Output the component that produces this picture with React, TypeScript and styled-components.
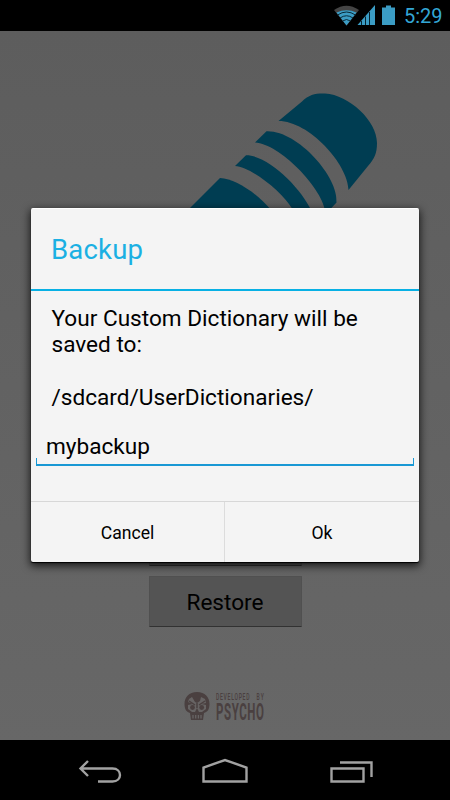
import React from 'react';
import styled, { createGlobalStyle } from 'styled-components';

const Global = createGlobalStyle`
  * { box-sizing: border-box; }
  body { margin: 0; background: #000; font-family: Roboto, "Liberation Sans", sans-serif; }
`;

const Screen = styled.div`
  position: relative;
  display: flex;
  flex-direction: column;
  width: 450px;
  height: 800px;
  overflow: hidden;
  background: #000;
`;

const StatusBar = styled.header`
  display: flex;
  justify-content: flex-end;
  align-items: flex-start;
  height: 31px;
  padding-right: 8px;
  color: #33a7d6;
`;

const StatusIcons = styled.svg`
  display: block;
  width: 64px;
  height: 31px;
`;

const Clock = styled.time`
  width: 38px;
  margin-left: 8px;
  padding-top: 4px;
  font-size: 20px;
  line-height: 24px;
  white-space: nowrap;
`;

const Content = styled.main`
  display: flex;
  flex-direction: column;
  align-items: center;
  height: 709px;
  background: linear-gradient(#5d5d5d, #676767);
`;

const Artwork = styled.svg`
  display: block;
  flex: none;
  width: 450px;
  height: 390px;
`;

const Actions = styled.div`
  display: flex;
  flex-direction: column;
  gap: 10px;
  padding-top: 94px;
`;

const HoloButton = styled.button`
  width: 153px;
  height: 51px;
  padding: 1px 0 0;
  border: 1px solid #505050;
  border-bottom: 1px solid #323232;
  border-radius: 1px;
  background: #545454;
  color: #000;
  font: 400 22.6px/49px Roboto, sans-serif;
`;

const Credit = styled.footer`
  display: flex;
  gap: 6px;
  width: 82px;
  height: 30px;
  margin: 64px 0 0 -1px;
  color: #4a4040;
`;

const Skull = styled.svg`
  flex: none;
  width: 26px;
  height: 30px;
`;

const CreditText = styled.svg`
  flex: none;
  width: 50px;
  height: 34px;
  overflow: visible;
  font-family: Roboto, sans-serif;
  fill: currentColor;
`;

const NavBar = styled.nav`
  display: flex;
  justify-content: center;
  height: 60px;
`;

const NavIcon = styled.svg`
  width: 126px;
  height: 60px;
  fill: none;
  stroke: #a2a2a2;
  stroke-width: 2.4;
`;

const Overlay = styled.div`
  position: absolute;
  top: 208px;
  left: 31px;
  width: 388px;
`;

const Dialog = styled.section`
  display: flex;
  flex-direction: column;
  height: 354px;
  border-radius: 2px;
  border-top: 1px solid #fff;
  background: #f4f4f4;
  box-shadow: 0 1px 1px #000, 0 3px 8px 1px rgba(0, 0, 0, 0.75);
  overflow: hidden;
`;

const Title = styled.h1`
  height: 82px;
  margin: 0;
  padding-left: 20px;
  border-bottom: 2px solid #08b0e4;
  color: #1bb0e3;
  font-size: 27.5px;
  font-weight: 400;
  line-height: 82px;
  letter-spacing: 0.2px;
`;

const Message = styled.p`
  height: 127px;
  margin: 0;
  padding: 15px 0 0 20.5px;
  color: #000;
  font-size: 22.6px;
  line-height: 26.2px;
  white-space: pre;
`;

const Field = styled.div`
  position: relative;
  height: 48px;
  margin: 0 5px;
  padding-left: 10px;
  font-size: 22.6px;
  line-height: 57px;

  &::after {
    content: '';
    position: absolute;
    left: 0;
    right: 0;
    bottom: 0;
    height: 6px;
    border: solid #1998d4;
    border-width: 0 1.5px 2px;
  }
`;

const ButtonRow = styled.div`
  display: grid;
  grid-template-columns: 194px 194px;
  height: 61px;
  margin-top: auto;
  border-top: 1px solid #d7d7d7;
`;

const DialogButton = styled.button<{ $divided?: boolean }>`
  padding: 1px 0 0;
  border: 0;
  border-right: ${(p) => (p.$divided ? '1px solid #dcdcdc' : '0')};
  background: transparent;
  color: #000;
  font: 400 17.6px Roboto, sans-serif;
`;

export default function App() {
  return (
    <Screen>
      <Global />
      <StatusBar>
        <StatusIcons viewBox="332 0 64 31" fill="#3b9cc4">
          <path d="M334 10Q346.500 1.500 359 10L346.500 25.500Z" fill="#444" />
          <path d="M336.500 12.500Q346.500 8 356.500 12.500L346.500 25.500Z" />
          <path d="M337.500 15Q346.500 9 355.500 15M340 18Q346.500 13.500 353 18M342.500 21Q346.500 18 350.500 21" fill="none" stroke="#092a38" strokeWidth="1" />
          <path d="M357.500 25L375 5V25Z" />
          <path d="M361.500 21V25M365.500 16.500V25M369.500 12V25" stroke="#05222e" strokeWidth="1" />
          <path d="M382 7.500H386V5.500H391V7.500H395V25H382Z" />
        </StatusIcons>
        <Clock>5:29</Clock>
      </StatusBar>
      <Content>
        <Artwork viewBox="0 31 450 390" fill="#003d52">
          <path d="M278.500 121L302 101.500C309 94.500 316 93.300 325 93.600C349 95 377 121 377 143C377 154 374 159 368 166L348.500 190C348 164 309 121 278.500 121Z" />
          <path d="M266.500 131.300L255 142.500C280 144 321 187 325 210L329.500 210L336.500 202.500C339 177 297 130 266.500 131.300Z" />
          <path d="M246 155.300L235 166C251 167 282 191 293 210H311C301 188 268 155 246 155.300Z" />
          <path d="M220 178L60 338L120 390L271 210C256 192 235 179 220 178Z" />
        </Artwork>
        <Actions>
          <HoloButton>Backup</HoloButton>
          <HoloButton>Restore</HoloButton>
        </Actions>
        <Credit>
          <Skull viewBox="0 0 26 30">
            <path d="M13 1C5 1 .5 6 .5 13C.5 19 3 21 6 22L7 29H19L20 22C23 21 25.500 19 25.500 13C25.500 6 21 1 13 1Z" fill="#4a4040" />
            <path d="M5 8L8 6L11 11L13 12L16 10L17 6L21 8L22 12L17 13L22 14L22 18L18 21H15L13 17L11 21H8L4 18V14L9 13L4 11Z" fill="#676464" />
            <circle cx="8.500" cy="16.500" r="2.400" fill="#4a4040" />
            <circle cx="17.700" cy="16.500" r="2.400" fill="#4a4040" />
            <path d="M5 10L11 14M21 10L15 14M13 12V17" stroke="#4a4040" strokeWidth="1.500" />
            <path d="M9 24V27.500M11.700 24V27.500M14.400 24V27.500M17 24V27.500" stroke="#676464" strokeWidth="1.300" />
          </Skull>
          <CreditText viewBox="0 0 50 34">
            <text transform="translate(0 8.500) scale(.62 1)" fontSize="8.200" fontWeight="500" textLength="54">DEVELOPED</text>
            <text transform="translate(40.500 8.500) scale(.62 1)" fontSize="8.200" fontWeight="500" textLength="12">BY</text>
            <text transform="translate(0 29) scale(.49 1)" fontSize="23.500" fontWeight="700" textLength="98">PSYCHO</text>
          </CreditText>
        </Credit>
      </Content>
      <NavBar>
        <NavIcon viewBox="36 740 126 60">
          <path d="M88 761L80.500 768.500L88 776M81 768.500H112.500C122.500 768.500 122.500 781.500 112.500 781.500H98" />
        </NavIcon>
        <NavIcon viewBox="162 740 126 60">
          <path d="M203.500 781.500V767.500L225 760L246.500 767.500V781.500Z" />
        </NavIcon>
        <NavIcon viewBox="288 740 126 60">
          <path d="M331.500 768.500H363.500V781.500H331.500ZM340 762.500H371.500V777" />
        </NavIcon>
      </NavBar>
      <Overlay>
        <Dialog role="dialog">
          <Title>Backup</Title>
          <Message>{'Your Custom Dictionary will be\nsaved to:\n\n/sdcard/UserDictionaries/'}</Message>
          <Field>mybackup</Field>
          <ButtonRow>
            <DialogButton $divided>Cancel</DialogButton>
            <DialogButton>Ok</DialogButton>
          </ButtonRow>
        </Dialog>
      </Overlay>
    </Screen>
  );
}
